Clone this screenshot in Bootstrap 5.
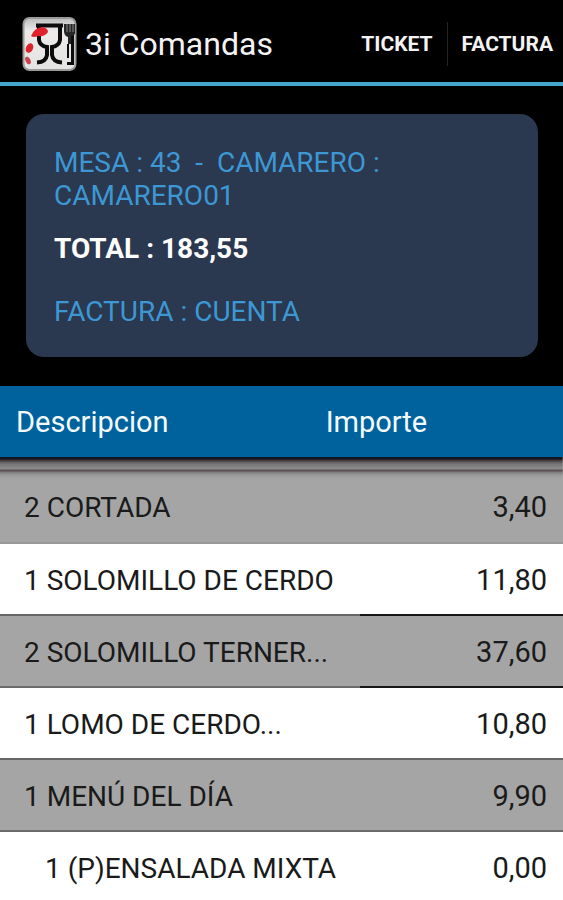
<!DOCTYPE html>
<html lang="es">
<head>
<meta charset="utf-8">
<meta name="viewport" content="width=device-width, initial-scale=1">
<title>3i Comandas</title>
<link href="https://cdn.jsdelivr.net/npm/bootstrap@5.3.0/dist/css/bootstrap.min.css" rel="stylesheet">
<style>
  body { font-family: Roboto, "Liberation Sans", sans-serif; font-size: 28px; line-height: 33px; background: #000; }
  .app-bar { min-height: 86px; padding: 5px 0 0 22px; border-bottom: 4px solid #45a5cc; }
  .app-title { font-size: 32px; line-height: 40px; color: #f3f3f3; padding-left: 7px; }
  .app-logo { width: 56px; height: 56px; }
  .app-action { font-size: 21px; line-height: 44px; font-weight: 700; color: #f3f3f3; padding: 0 14px; border: 0; background: none; }
  .app-action + .app-action { border-left: 1px solid #242424; padding-right: 10px; }
  .summary { margin: 28px 25px 29px 26px; padding: 32px 28px 29px; border-radius: 18px; background: #2a3850; color: #3d97d3; }
  .summary p { margin: 0; white-space: pre-wrap; }
  .summary .total { margin: 20px 0 30px; color: #fff; font-weight: 700; }
  .order { table-layout: fixed; }
  .order > :not(caption) > * > * { background: none; box-shadow: none; border: 0; color: #1a1a1a; font-weight: 400; }
  .order > thead > tr > th { background: #00629d; color: #f4fbff; font-size: 29px; padding: 20px 16px 18px; }
  .order > tbody > tr { background: #fff; }
  .order > tbody > tr > * { padding: 20px 16px 17px 24px; }
  .order > tbody > tr > .text-end { font-size: 29px; }
  .order > tbody > tr:nth-child(odd) { background: #a5a5a5; }
  .order > tbody > tr:nth-child(odd) > * { border-top: 2px solid #666; border-bottom: 2px solid #6c6c6c; }
  .order > tbody > tr:nth-child(odd) > .mark-line { border-color: #161616; }
  .order > tbody > tr:first-child { background: linear-gradient(#101722 0, #17171f 2px, #51464b 4px, #777 7px, #8b8b8b 12px, #5e4e55 13px, #5e4e55 14px, #7c7c7c 15px, #999 18px, #a5a5a5 22px) #a5a5a5; }
  .order > tbody > tr:first-child > * { padding-top: 34px; padding-bottom: 18px; border-bottom-color: #999; border-top: 0; }
  .order > tbody > tr > .sub-item { padding-left: 45px; }
</style>
<script src="https://cdn.jsdelivr.net/npm/bootstrap@5.3.0/dist/js/bootstrap.bundle.min.js"></script>
</head>
<body>
<header class="app-bar d-flex align-items-center">
  <svg class="app-logo flex-shrink-0" viewBox="0 0 56 56" aria-hidden="true">
    <defs>
      <linearGradient id="tile" x2="0" y2="1"><stop stop-color="#bdbdbd"/><stop offset=".25" stop-color="#ecebea"/><stop offset="1" stop-color="#e4e4e2"/></linearGradient>
    </defs>
    <rect x="1.500" y="2" width="52" height="52" rx="6" fill="url(#tile)" stroke="#9a9a9a" stroke-width="2"/>
    <g fill="none" stroke="#0c0c0c" stroke-width="4">
      <path d="M14 9.500H41"/>
      <path d="M17 10V24Q18 30 25 31V39Q24 46 15 46.500"/>
      <path d="M38 10V24Q37 30 30 31V39Q31 46 40 46.500"/>
      <path d="M45 47.500H50.500V19" stroke-width="3"/>
      <path d="M46 42V28" stroke-width="2"/>
    </g>
    <path d="M42 8H53V18Q51 20 49 20V28H46V21Q42 20 42 15Z" fill="#262626"/>
    <path d="M45 8V16M48 8V16M51 8V16" stroke="#888" stroke-width="1"/>
    <g fill="#df222b">
      <path d="M9 20Q12 12 20 11Q26 12 26 16Q23 21 16 20Q12 22 9 20Z"/>
      <ellipse cx="7.500" cy="32" rx="3.500" ry="5" transform="rotate(25 7.500 32)"/>
      <ellipse cx="6" cy="44.500" rx="2.500" ry="4" transform="rotate(-25 6 44.500)" fill="#c9444d"/>
    </g>
  </svg>
  <h1 class="app-title fw-normal mb-0 me-auto text-nowrap">3i Comandas</h1>
  <nav class="d-flex" aria-label="Acciones">
    <button type="button" class="app-action">TICKET</button>
    <button type="button" class="app-action">FACTURA</button>
  </nav>
</header>
<main>
  <section class="summary">
    <p>MESA : 43  -  CAMARERO : CAMARERO01</p>
    <p class="total">TOTAL : 183,55</p>
    <p>FACTURA : CUENTA</p>
  </section>
  <table class="order table mb-0">
    <colgroup><col style="width:55%"><col style="width:9%"><col style="width:36%"></colgroup>
    <thead>
      <tr><th scope="col">Descripcion</th><th scope="col" colspan="2">Importe</th></tr>
    </thead>
    <tbody>
      <tr><td colspan="2">2 CORTADA</td><td class="text-end">3,40</td></tr>
      <tr><td colspan="2">1 SOLOMILLO DE CERDO</td><td class="text-end">11,80</td></tr>
      <tr><td colspan="2">2 SOLOMILLO TERNER...</td><td class="text-end mark-line">37,60</td></tr>
      <tr><td colspan="2">1 LOMO DE CERDO...</td><td class="text-end">10,80</td></tr>
      <tr><td colspan="2">1 MENÚ DEL DÍA</td><td class="text-end">9,90</td></tr>
      <tr><td colspan="2" class="sub-item">1 (P)ENSALADA MIXTA</td><td class="text-end">0,00</td></tr>
    </tbody>
  </table>
</main>
</body>
</html>
